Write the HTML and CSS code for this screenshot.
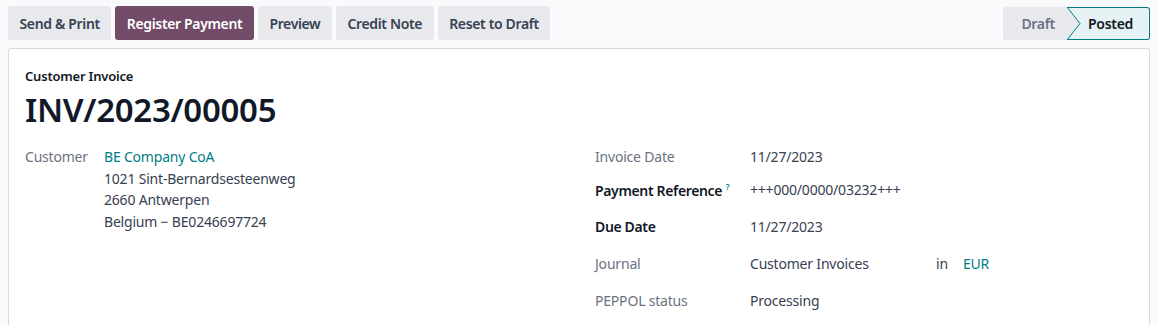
FILE: index.html
```html
<!DOCTYPE html>
<html lang="en">
<head>
  <meta charset="UTF-8">
  <title>INV/2023/00005</title>
  <link rel="stylesheet" href="styles.css">
</head>
<body>
  <!-- barra de ações -->
  <div class="toolbar">
    <div class="actions">
      <button class="btn">Send &amp; Print</button>
      <button class="btn primary">Register Payment</button>
      <button class="btn">Preview</button>
      <button class="btn">Credit Note</button>
      <button class="btn">Reset to Draft</button>
    </div>
    <div class="statusbar">
      <span class="step">Draft</span>
      <span class="step current">
        <svg class="arrow" width="14" height="33" viewBox="0 0 14 33"><polygon points="0,0 13,16.5 0,33" fill="#e7e9ed"/><polyline points="0,0 13,16.5 0,33" fill="none" stroke="#017e84" stroke-width="1"/></svg>
        Posted
      </span>
    </div>
  </div>

  <!-- folha -->
  <div class="sheet">
    <div class="kind">Customer Invoice</div>
    <h1>INV/2023/00005</h1>

    <div class="groups">
      <div class="group left">
        <div class="label">Customer</div>
        <div class="address">
          <a class="link">BE Company CoA</a>
          <div>1021 Sint-Bernardsesteenweg</div>
          <div>2660 Antwerpen</div>
          <div>Belgium &minus; BE0246697724</div>
        </div>
      </div>

      <div class="group right">
        <div class="row first"><div class="label">Invoice Date</div><div class="value">11/27/2023</div></div>
        <div class="row"><div class="label strong">Payment Reference <sup>?</sup></div><div class="value">+++000/0000/03232+++</div></div>
        <div class="row"><div class="label strong">Due Date</div><div class="value">11/27/2023</div></div>
        <div class="row">
          <div class="label">Journal</div>
          <div class="value journal"><span class="jname">Customer Invoices</span><span class="in">in</span><a class="link">EUR</a></div>
        </div>
        <div class="row"><div class="label">PEPPOL status</div><div class="value">Processing</div></div>
      </div>
    </div>
  </div>
</body>
</html>
```

FILE: styles.css
```css
* {
  margin: 0;
  padding: 0;
  box-sizing: border-box;
}
html, body {
  height: 100%;
}
body {
  background: #f9fafb;
  font-family: "Noto Sans", sans-serif;
  font-size: 14px;
  letter-spacing: -0.2px;
  color: #374151;
  padding: 6px 8px 0 8px;
  overflow: hidden;
  display: flex;
  flex-direction: column;
}
.toolbar {
  display: flex;
  justify-content: space-between;
  align-items: flex-start;
}
.actions {
  display: flex;
  gap: 4px;
}
.btn {
  font-family: inherit;
  font-size: 14px;
  font-weight: 600;
  letter-spacing: -0.35px;
  color: #374151;
  background: #e7e9ed;
  border: none;
  border-radius: 3px;
  height: 34px;
  padding: 0 11.5px;
}
.btn.primary {
  background: #714b67;
  color: #fff;
}
.statusbar {
  display: flex;
  margin-top: 1px;
  height: 33px;
}
.step {
  display: flex;
  align-items: center;
  font-weight: 600;
  letter-spacing: -0.3px;
  background: #e7e9ed;
  color: #6b7280;
  padding: 0 12px 0 18px;
  border-radius: 3px 0 0 3px;
}
.step.current {
  position: relative;
  background: #e6f2f3;
  color: #111827;
  border: 1px solid #017e84;
  border-left: none;
  border-radius: 0 3px 3px 0;
  padding: 0 16px 0 21px;
}
.arrow {
  position: absolute;
  left: 0;
  top: -1px;
}
.sheet {
  flex: 1;
  margin-top: 8px;
  background: #fff;
  border: 1px solid #d8dadd;
  border-bottom: none;
  border-radius: 3px 3px 0 0;
  padding: 18px 16px 0 16px;
}
.kind {
  font-size: 13px;
  font-weight: 600;
  letter-spacing: -0.2px;
  color: #111827;
}
h1 {
  font-size: 33px;
  font-weight: 600;
  letter-spacing: -0.3px;
  color: #111827;
  line-height: 46px;
  margin-top: 2px;
}
.groups {
  display: flex;
  margin-top: 14px;
}
.group.left {
  width: 570px;
  display: flex;
}
.label {
  color: #6b7280;
  width: 79px;
}
.label.strong {
  color: #111827;
  font-weight: 600;
  letter-spacing: -0.35px;
}
sup {
  color: #017e84;
  font-size: 9px;
}
.address {
  line-height: 21.5px;
  margin-top: -1px;
}
.link {
  color: #017e84;
}
.group.right {
  flex: 1;
}
.row {
  display: flex;
  height: 37px;
}
.row.first {
  height: 33px;
}
.row .label {
  width: 155px;
}
.journal {
  display: flex;
}
.jname {
  width: 186px;
}
.in {
  width: 27px;
}
```
